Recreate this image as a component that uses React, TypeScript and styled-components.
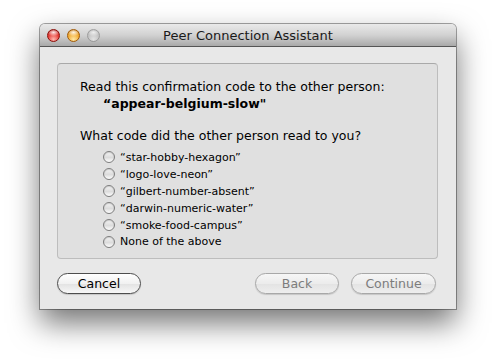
import React from 'react';
import styled, { createGlobalStyle, css } from 'styled-components';

const GlobalStyle = createGlobalStyle`
  html, body {
    margin: 0;
    padding: 0;
    background: #fff;
  }
  body {
    font-family: 'DejaVu Sans', 'Liberation Sans', sans-serif;
    color: #000;
  }
`;

const Page = styled.div`
  width: 495px;
  height: 364px;
  padding: 24px 0 0 40px;
  box-sizing: border-box;
`;

const Window = styled.div`
  width: 416px;
  height: 285px;
  display: flex;
  flex-direction: column;
  background: #e8e8e8;
  border-radius: 5px 5px 0 0;
  box-shadow: 0 0 0 1px rgba(0, 0, 0, 0.35), 0 14px 30px rgba(0, 0, 0, 0.55);
`;

const TitleBar = styled.div`
  height: 22px;
  flex: 0 0 auto;
  display: flex;
  align-items: center;
  position: relative;
  border-radius: 5px 5px 0 0;
  background: linear-gradient(#e9e9e9, #d2d2d2 50%, #a9a9a9);
  border-bottom: 1px solid #555;
`;

const Lights = styled.div`
  display: flex;
  gap: 7px;
  padding-left: 7px;
`;

type LightKind = 'close' | 'min' | 'zoom';

const lightColors: Record<LightKind, [string, string, string]> = {
  close: ['#ffb8b0', '#e2302a', '#8a0d08'],
  min: ['#ffe8a8', '#f0a526', '#a15a06'],
  zoom: ['#eeeeee', '#bcbcbc', '#8c8c8c'],
};

const Light = styled.span<{ kind: LightKind }>`
  width: 13px;
  height: 13px;
  border-radius: 50%;
  box-sizing: border-box;
  border: 1px solid ${p => lightColors[p.kind][2]};
  background:
    radial-gradient(ellipse 60% 35% at 50% 22%, rgba(255, 255, 255, 0.9), rgba(255, 255, 255, 0) 100%),
    radial-gradient(circle at 50% 85%, ${p => lightColors[p.kind][0]}, ${p => lightColors[p.kind][1]} 60%, ${p => lightColors[p.kind][2]});
  ${p =>
    p.kind === 'zoom' &&
    css`
      opacity: 0.75;
    `}
`;

const Title = styled.div`
  position: absolute;
  left: 0;
  right: 0;
  top: 0;
  bottom: 0;
  display: flex;
  align-items: center;
  justify-content: center;
  font-size: 13px;
  color: #1a1a1a;
  pointer-events: none;
`;

const Content = styled.div`
  flex: 1 1 auto;
  display: flex;
  flex-direction: column;
  padding: 16px 18px 15px 17px;
`;

const Box = styled.div`
  height: 196px;
  box-sizing: border-box;
  background: #e0e0e0;
  border: 1px solid #bdbdbd;
  border-top-color: #a9a9a9;
  border-radius: 4px;
  padding: 14px 0 0 22px;
  font-size: 12.5px;
`;

const Prompt = styled.div`
  line-height: 17px;
`;

const Code = styled.div`
  font-weight: bold;
  line-height: 17px;
  padding-left: 23px;
  margin-bottom: 15px;
`;

const Options = styled.div`
  display: flex;
  flex-direction: column;
  padding: 5px 0 0 23px;
`;

const Option = styled.label`
  display: flex;
  align-items: center;
  gap: 5px;
  height: 16.9px;
  font-size: 11px;
`;

const Radio = styled.span`
  width: 12px;
  height: 12px;
  border-radius: 50%;
  box-sizing: border-box;
  border: 1px solid #7d7d7d;
  background: linear-gradient(#f4f4f4, #dcdcdc 55%, #fdfdfd);
  box-shadow: inset 0 1px 1px rgba(0, 0, 0, 0.15);
`;

const Footer = styled.div`
  display: flex;
  align-items: center;
  margin-top: auto;
  padding-right: 2px;
  gap: 12px;
`;

const Spacer = styled.div`
  flex: 1;
`;

const Button = styled.button<{ disabled?: boolean; width: number }>`
  width: ${p => p.width}px;
  height: 21px;
  border-radius: 11px;
  font-family: inherit;
  font-size: 12.5px;
  padding: 0;
  background: linear-gradient(#ffffff, #f1f1f1 50%, #e2e2e2 51%, #f7f7f7);
  border: 1px solid ${p => (p.disabled ? '#a8a8a8' : '#4d4d4d')};
  color: ${p => (p.disabled ? '#7c7c7c' : '#000')};
  box-shadow: 0 1px 1px rgba(0, 0, 0, 0.15);
  ${p =>
    p.disabled &&
    css`
      background: linear-gradient(#f6f6f6, #ececec 50%, #e3e3e3 51%, #eeeeee);
    `}
`;

const options = [
  '\u201cstar-hobby-hexagon\u201d',
  '\u201clogo-love-neon\u201d',
  '\u201cgilbert-number-absent\u201d',
  '\u201cdarwin-numeric-water\u201d',
  '\u201csmoke-food-campus\u201d',
  'None of the above',
];

export default function App() {
  return (
    <Page>
      <GlobalStyle />
      <Window>
        <TitleBar>
          <Lights>
            <Light kind="close" />
            <Light kind="min" />
            <Light kind="zoom" />
          </Lights>
          <Title>Peer Connection Assistant</Title>
        </TitleBar>
        <Content>
          <Box>
            <Prompt>Read this confirmation code to the other person:</Prompt>
            <Code>{'\u201cappear-belgium-slow"'}</Code>
            <Prompt>What code did the other person read to you?</Prompt>
            <Options>
              {options.map(o => (
                <Option key={o}>
                  <Radio />
                  {o}
                </Option>
              ))}
            </Options>
          </Box>
          <Footer>
            <Button width={84}>Cancel</Button>
            <Spacer />
            <Button width={84} disabled>
              Back
            </Button>
            <Button width={85} disabled>
              Continue
            </Button>
          </Footer>
        </Content>
      </Window>
    </Page>
  );
}
